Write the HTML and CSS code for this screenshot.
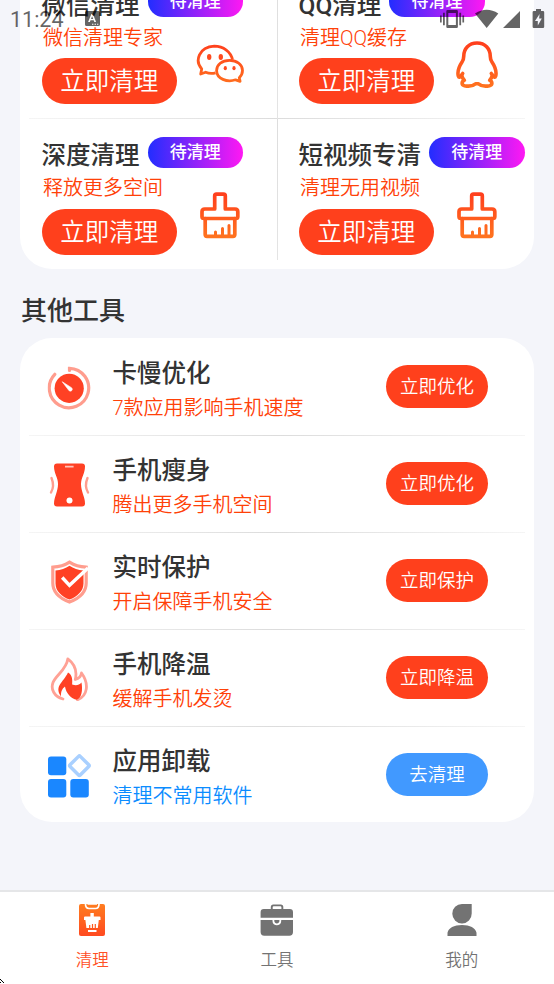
FILE: index.html
```html
<!DOCTYPE html>
<html lang="zh-CN">
<head>
<meta charset="utf-8">
<title>清理</title>
<link rel="stylesheet" href="styles.css">
</head>
<body>
<svg class="defs" width="0" height="0" aria-hidden="true">
  <defs>
    <linearGradient id="warm" gradientUnits="userSpaceOnUse" x1="0" y1="0" x2="0" y2="48"><stop offset="0" stop-color="#ff3c1d"/><stop offset="1" stop-color="#ff751f"/></linearGradient>
    <linearGradient id="tab" x1="0" y1="0" x2="0" y2="1"><stop offset="0" stop-color="#ff7d20"/><stop offset="1" stop-color="#ff4a20"/></linearGradient>
    <symbol id="brush" viewBox="0 0 48 48">
      <g fill="none" stroke="url(#warm)" stroke-width="3.700" stroke-linejoin="round" stroke-linecap="round">
        <path d="M18.700 18V5q0-1.800 1.800-1.800h7q1.800 0 1.800 1.800V18h9.700q2.800 0 2.800 2.800v4.700q0 2-2 2H8q-2 0-2-2v-4.700q0-2.800 2.800-2.800z"/>
        <path d="M9.200 27.500v16q0 1.800 1.800 1.800h26q1.800 0 1.800-1.800v-16"/>
        <path d="M19.500 44v-3M26.500 44v-6.500M33 44V34.500" stroke-width="3"/>
      </g>
    </symbol>
  </defs>
</svg>
<div class="screen">
  <header class="status">
    <span class="clock">11:24</span>
    <svg class="ime" viewBox="0 0 16 16"><path fill-rule="evenodd" d="M1.500 0h12q1.500 0 1.500 1.500v12q0 1.500-1.500 1.500h-12Q0 15 0 13.500v-12Q0 0 1.500 0zM6.400 3L3.100 11h1.800l.6-1.700h3.200l.6 1.700h1.800L7.900 3zm.7 2.200L8.200 8H6zM7 12.800v1h1.400v-1zm2.600 0v1H11v-1zm2.500 0v1h1.200v-1z"/></svg>
    <span class="spacer"></span>
    <svg class="signals" viewBox="0 0 106 20">
      <path d="M1 6.500h1.700v7H1zM4 3.700h1.800v12.600H4zM20.300 3.700h1.800v12.600h-1.800zM23.400 6.500h1.700v7h-1.700z"/>
      <path fill-rule="evenodd" d="M8.500 1h9.200q1.200 0 1.200 1.200v15.600q0 1.200-1.200 1.200H8.500q-1.200 0-1.200-1.200V2.200Q7.300 1 8.500 1zM9.300 4v12h7.600V4z"/>
      <path d="M36 4.500Q47.700-3 59.300 4.500L47.700 19zM64 19L81 2v17z"/>
      <path fill-rule="evenodd" d="M97 0h5v2h2q1.200 0 1.200 1.200v14.600q0 1.200-1.200 1.200h-9.200q-1.200 0-1.200-1.200V3.200Q93.600 2 94.800 2H97zm3.600 5L96 12h2.800v4.500l4-7h-2.700z"/>
    </svg>
  </header>

  <main class="content">
    <section class="card cleaners">
      <div class="pair">
        <article class="cell">
          <div class="head"><h2>微信清理</h2><span class="badge">待清理</span></div>
          <p>微信清理专家</p>
          <button class="big">立即清理</button>
          <svg class="art" viewBox="0 0 48 48"><g fill="none" stroke="url(#warm)" stroke-width="2.800" stroke-linejoin="round"><path d="M19.500 31.800C15.500 33 11.500 32 9.600 31.200L4.700 33l1-5.100C-1.500 20 2.800 6 18.300 5.200 27.500 5.200 35 11 36.500 18.800"/><path d="M33.500 19.300c7.500 0 13 4.500 13 10.200 0 3.200-1.500 5.500-3.200 7.200l.8 3.600-4.500-1.500c-8.500 3-19-1-19-9.300 0-5.700 5.400-10.200 12.900-10.200z"/></g><g fill="#ff4a1e"><ellipse cx="13.200" cy="16" rx="2.200" ry="3"/><ellipse cx="24.800" cy="16" rx="2.200" ry="3"/><ellipse cx="29.300" cy="27.200" rx="1.600" ry="2.100"/><ellipse cx="38" cy="27.200" rx="1.600" ry="2.100"/></g></svg>
        </article>
        <article class="cell">
          <div class="head"><h2>QQ清理</h2><span class="badge">待清理</span></div>
          <p>清理QQ缓存</p>
          <button class="big">立即清理</button>
          <svg class="art" viewBox="0 0 48 48"><path fill="none" stroke="url(#warm)" stroke-width="3.600" stroke-linejoin="round" d="M24 2C16 2 10.700 7.500 10.700 15.500c0 2-.5 3.500-1.500 5.200C6 25.500 4.300 31 5.300 35c.6 1.900 1.700 1.500 3.300-.7.500 2 1.300 3.500 2.700 5-2.600 1-3.300 4.500.2 5.400 4.500 1 8.500.2 11-1.900h3c2.500 2.100 6.500 2.900 11 1.900 3.500-.9 2.800-4.400.2-5.400 1.400-1.500 2.200-3 2.700-5 1.600 2.200 2.700 2.600 3.300.7 1-4-.7-9.500-3.900-14.300-1-1.700-1.500-3.200-1.500-5.200C37.300 7.500 32 2 24 2z"/><path d="M8.200 34.500l1.500-2M39.800 34.500l-1.500-2" stroke="#ff611e" stroke-width="3.600" stroke-linecap="round"/></svg>
        </article>
      </div>
      <div class="pair">
        <article class="cell">
          <div class="head"><h2>深度清理</h2><span class="badge">待清理</span></div>
          <p>释放更多空间</p>
          <button class="big">立即清理</button>
          <svg class="art"><use href="#brush"/></svg>
        </article>
        <article class="cell">
          <div class="head"><h2>短视频专清</h2><span class="badge">待清理</span></div>
          <p>清理无用视频</p>
          <button class="big">立即清理</button>
          <svg class="art"><use href="#brush"/></svg>
        </article>
      </div>
    </section>

    <h1>其他工具</h1>

    <section class="card tools">
      <article class="tool">
        <svg viewBox="0 0 44 44"><path d="M7.300 8.300a19.700 19.700 0 1 0 14.700-6V4.500" fill="none" stroke="#ff9d8e" stroke-width="3.200" stroke-linecap="round"/><circle cx="21.700" cy="22.300" r="14.600" fill="#ff4124"/><path d="M14.700 15.700l9.300 6c1.900 1.800-.2 4.500-2.400 3z" fill="#fff" stroke="#fff" stroke-width=".6"/></svg>
        <div class="info"><h2>卡慢优化</h2><p>7款应用影响手机速度</p></div>
        <button>立即优化</button>
      </article>
      <article class="tool">
        <svg viewBox="0 0 44 44"><path d="M9.500.5h25q3 0 3 3c0 7-4 11-4 17.500 0 7.500 4 13 4 19.500q0 3-3 3h-25q-3 0-3-3c0-6.500 4-12 4-19.500 0-6.500-4-10.500-4-17.500q0-3 3-3z" fill="#ff4124"/><path d="M17.500 3.700h8.600" stroke="#ffc3b9" stroke-width="1.800"/><circle cx="22" cy="37.500" r="3" fill="#fff"/><path d="M4 15q3.300 8-.5 14.500M40 15q-3.300 8 .5 14.500" fill="none" stroke="#ff9d8e" stroke-width="2.400" stroke-linecap="round"/></svg>
        <div class="info"><h2>手机瘦身</h2><p>腾出更多手机空间</p></div>
        <button>立即优化</button>
      </article>
      <article class="tool">
        <svg viewBox="0 0 44 44"><path d="M22 2.200c4.500 3 10 4.800 16.700 5V23C38.700 33 30.500 38.800 22 42 13.500 38.800 5.300 33 5.300 23V7.200c6.700-.2 12.200-2 16.700-5z" fill="#fff" stroke="#ff9d8e" stroke-width="3.200"/><path d="M22 5.700c4 2.600 8.700 4.300 14 4.700v13c0 7.900-6.400 12.900-14 16.200C14.400 36.300 8 31.300 8 23.400v-13c5.300-.4 10-2.100 14-4.700z" fill="#ff4124"/><path d="M14.700 17.500l7.300 7.800L40.500 8" fill="none" stroke="#fff" stroke-width="3.400"/></svg>
        <div class="info"><h2>实时保护</h2><p>开启保障手机安全</p></div>
        <button>立即保护</button>
      </article>
      <article class="tool">
        <svg viewBox="0 0 44 44"><path d="M15.500 42C6.500 39.500 3 32 5.500 25.500 8.500 18 19 12.500 20.300 1.800 26 6 30 13 27.800 22.500c4-1 5.800-4 6.200-6.500 8 11 6 23-4 26.800" fill="none" stroke="#ffa195" stroke-width="2.800" stroke-linejoin="round" stroke-linecap="round"/><path d="M13.500 39.500C6.500 29 15.500 26 20.500 15.500 25 18 25 23 24.600 27.500 29 29 31.500 28 34 25.500c1.500 8 0 15.500-4.700 17.300-5.500-1-11-7-11.800-13.400-3 2.400-4.200 5-4 10.100z" fill="#ff4124"/></svg>
        <div class="info"><h2>手机降温</h2><p>缓解手机发烫</p></div>
        <button>立即降温</button>
      </article>
      <article class="tool blue">
        <svg viewBox="0 0 44 44"><g fill="#1a87ff"><rect x=".5" y="2.500" width="18.300" height="18.700" rx="3"/><rect x=".5" y="25" width="18.300" height="18.500" rx="3"/><rect x="22.800" y="25" width="18.500" height="18.500" rx="3"/></g><rect x="24.700" y="4.500" width="14.400" height="14.400" rx="1.200" transform="rotate(45 31.900 11.700)" fill="none" stroke="#a9d0ff" stroke-width="3.500"/></svg>
        <div class="info"><h2>应用卸载</h2><p>清理不常用软件</p></div>
        <button>去清理</button>
      </article>
    </section>
  </main>

  <nav class="tabs">
    <a class="active">
      <svg viewBox="0 0 34 34"><path d="M6 1h22q2 0 2 2v28q0 2-2 2H6q-2 0-2-2V3q0-2 2-2z" fill="url(#tab)"/><path d="M10.500 1q0 4.500 3.500 4.500h6.500Q24 5.500 24 1" fill="none" stroke="#fff" stroke-width="1.700"/><path d="M12.500 1h9.500" stroke="#fff" stroke-width="1.500"/><path d="M15.400 10h3.400v3.500h5.700q1 0 1 1V17h-1.700l-1 8H11.400l-1-8H9v-2.500q0-1 1-1h5.400zM13 27h8.500v2H13z" fill="#fff"/><path d="M14.700 25v-3M17.500 25v-4M20.300 25v-4" stroke="#ff5a20" stroke-width="1.200"/></svg>
      <span>清理</span>
    </a>
    <a>
      <svg viewBox="0 0 34 34"><path fill="#737373" fill-rule="evenodd" d="M.6 14.800V9.200q0-3.200 3.200-3.200h7V4q0-2.500 2.500-2.500h7.500q2.500 0 2.500 2.500v2h6.500Q33 6 33 9.200v5.600zM12.700 6h8.700V4.300q0-1-1-1h-6.700q-1 0-1 1zM.6 17h11.900v1c0 5.800 8.700 5.800 8.700 0v-1H33v12q0 3.700-3.700 3.700h-25Q.6 32.700.6 29zM14.300 17h5.100v1c0 3.200-5.100 3.200-5.100 0z"/></svg>
      <span>工具</span>
    </a>
    <a>
      <svg viewBox="0 0 34 34"><path d="M17 1h9.700v9.500A9.700 9.700 0 1 1 17 1zM2.500 33v-3.200C3.500 25 9 22 17 22s13.500 3 14.500 7.800V33z" fill="#737373"/></svg>
      <span>我的</span>
    </a>
    <svg class="pointer" viewBox="0 0 5 5"><path d="M0 0h1v1h1v1h1v1h1v1H3V3H2V2H1V1H0zM0 3h1v1H0z"/></svg>
  </nav>
</div>
</body>
</html>
```
FILE: styles.css
```css
* { box-sizing: border-box; }
body {
  margin: 0;
  font-family: Roboto, "Noto Sans CJK SC", sans-serif;
  color: #333;
}
h1, h2, p { margin: 0; font-weight: 500; white-space: nowrap; }
h1, h2 { font-family: "Noto Sans CJK SC", sans-serif; }
.pair h2 { font-family: Roboto, "Noto Sans CJK SC", sans-serif; }
button {
  display: block;
  padding: 0;
  border: 0;
  border-radius: 30px;
  background: #ff401c;
  color: #fff;
  font-family: inherit;
  font-weight: 350;
  white-space: nowrap;
}
svg { display: block; }
.defs { position: absolute; }
.screen {
  position: relative;
  display: flex;
  flex-direction: column;
  width: 554px;
  height: 984px;
  overflow: hidden;
  background: #f4f5fa;
}

.status {
  position: absolute;
  inset: 0 0 auto;
  z-index: 2;
  display: flex;
  align-items: center;
  height: 37px;
  padding: 0 9.500px 0 10px;
  opacity: .6;
}
.clock { color: #000; font-size: 21.500px; line-height: 40px; width: 75px; transform: translateY(1px); }
.ime { width: 16px; height: 16px; }
.spacer { flex: 1; }
.signals { width: 106px; height: 20px; }

.content { flex: 1; min-height: 0; padding: 0 20px; overflow: hidden; }
.card { border-radius: 32px; background: #fff; }
.cleaners { margin-top: -32.500px; }
.pair { display: grid; grid-template-columns: 258px 256px; height: 149.500px; }
.pair:first-child {
  height: 151.500px;
  background: linear-gradient(90deg, #f5f5f5, #dcdcdc 50%, #f5f5f5) center bottom / 496px 1.500px no-repeat;
}
.cell { position: relative; padding: 17.500px 0 0 21.500px; }
.pair:first-child .cell { padding-top: 18.500px; }
.cell:first-child { background: linear-gradient(#ddd, #e4e4e4) right top / 1px 141px no-repeat; }
.pair:first-child .cell:first-child { background-size: 1px 100%; }
.cell:nth-child(2) { padding-left: 20.500px; }
.head { display: flex; align-items: center; gap: 8px; height: 31px; }
h2 { font-size: 24.500px; line-height: 32px; }
.head h2 { transform: translateY(4px); }
.badge {
  width: 95.500px;
  height: 31px;
  border-radius: 16px;
  background: linear-gradient(90deg, #222dff, #ff18f3);
  color: #fff;
  font-size: 17px;
  font-weight: 500;
  line-height: 31px;
  text-align: center;
}
p { color: #ff4108; font-size: 20px; font-weight: 350; line-height: 28px; }
.cell p { margin: 6.500px 0 6.500px 1.500px; }
.big { width: 135.500px; height: 46px; font-size: 24.500px; line-height: 48px; }
.art { position: absolute; left: 175.500px; top: 71.500px; width: 48px; height: 48px; }
.pair:first-child .art { top: 73px; }
.cell:nth-child(2) .art { left: 174.500px; }

h1 { height: 69.500px; padding: 21px 0 0 1px; font-size: 26px; line-height: 38px; }

.tool {
  display: flex;
  align-items: center;
  height: 96.900px;
  padding: 0 46px 0 27.500px;
}
.tool:not(:first-child) {
  background: linear-gradient(90deg, #f5f5f5, #dcdcdc 50%, #f5f5f5) center top / 496px 1px no-repeat;
}
.tool > svg { width: 44px; height: 44px; transform: translate(-.5px, 2px); }
.info { flex: 1; padding: 5px 0 0 21px; }
.info p { margin-top: 6px; line-height: 28px; }
.tool button { width: 102px; height: 43px; font-size: 18.500px; line-height: 44px; }
.blue p { color: #0b8cff; }
.blue button { background: #4199ff; }

.tabs {
  position: relative;
  display: grid;
  grid-template-columns: repeat(3, 1fr);
  height: 94px;
  border-top: 2px solid #e5e6e8;
  background: #fff;
}
.tabs a {
  display: flex;
  flex-direction: column;
  align-items: center;
  padding-top: 11px;
  color: #737373;
  font-size: 16.500px;
  font-weight: 350;
  line-height: 24px;
}
.tabs a svg { width: 34px; height: 34px; margin-bottom: 12px; }
.tabs .active { color: #ff5126; }
.tabs .pointer { position: absolute; left: 0; bottom: 0; width: 5px; height: 5px; }
```
